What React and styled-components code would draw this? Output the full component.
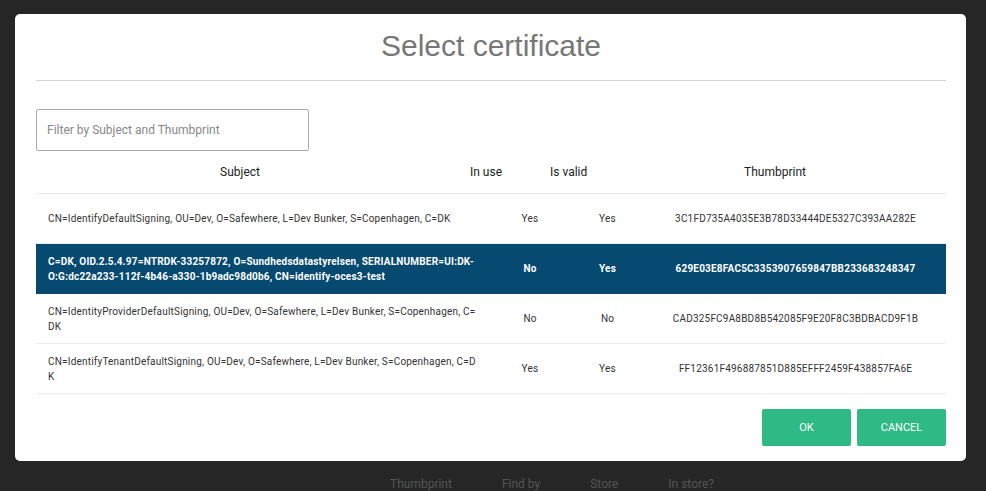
import React from 'react'
import styled, { createGlobalStyle } from 'styled-components'

const Global = createGlobalStyle`
  html, body { margin: 0; background: #262626; font-family: Roboto, "Liberation Sans", sans-serif; }
`

const Page = styled.div`
  height: 491px;
  padding: 14px 20px 0 15px;
  box-sizing: border-box;
  position: relative;
  overflow: hidden;
`

const Modal = styled.div`
  width: 951px;
  height: 447px;
  background: #fff;
  border-radius: 5px;
  box-sizing: border-box;
  padding: 0 20px 0 21px;
  display: flex;
  flex-direction: column;
`

const Title = styled.h1`
  margin: 0;
  height: 66px;
  line-height: 64px;
  text-align: center;
  font-family: "Liberation Sans", Arial, sans-serif;
  font-weight: 400;
  font-size: 30px;
  color: #777;
  border-bottom: 1px solid #d6d6d6;
`

const Filter = styled.input`
  margin-top: 28px;
  width: 273px;
  height: 42px;
  box-sizing: border-box;
  border: 1px solid #aaa;
  border-radius: 2px;
  padding: 0 10px;
  font-family: inherit;
  font-size: 12px;
  &::placeholder { color: #888; }
`

const cols = '454px 80px 75px 1fr'

const Head = styled.div`
  display: grid;
  grid-template-columns: 408px 80px 80px 1fr;
  height: 43px;
  box-sizing: border-box;
  align-items: center;
  font-size: 12px;
  color: #222;
  border-bottom: 1px solid #e6e6e6;
`

const HeadCell = styled.div`
  text-align: ${p => (p.$left ? 'left' : 'center')};
  padding-left: ${p => (p.$left ? '26px' : '0')};
`

const Row = styled.div`
  display: grid;
  grid-template-columns: ${cols};
  height: 50px;
  box-sizing: border-box;
  align-items: center;
  font-size: 10px;
  line-height: 15px;
  letter-spacing: 0.2px;
  color: ${p => (p.$active ? '#fff' : '#333')};
  background: ${p => (p.$active ? '#074a71' : '#fff')};
  font-weight: ${p => (p.$active ? 700 : 400)};
  border-bottom: 1px solid ${p => (p.$active ? '#074a71' : '#ececec')};
`

const Cell = styled.div`
  text-align: ${p => (p.$left ? 'left' : 'center')};
  padding: ${p => (p.$left ? '0 10px 0 12px' : '0')};
  word-break: break-all;
`

const Footer = styled.div`
  margin-top: auto;
  margin-bottom: 15px;
  display: flex;
  justify-content: flex-end;
  gap: 6px;
`

const Button = styled.button`
  width: 89px;
  height: 37px;
  border: none;
  border-radius: 2px;
  background: #2fb985;
  color: #fff;
  font-family: inherit;
  font-size: 11px;
  text-transform: uppercase;
`

const BackText = styled.div`
  position: absolute;
  bottom: 0;
  left: 390px;
  display: flex;
  gap: 50px;
  color: #555;
  font-size: 12px;
  line-height: 14px;
`

const rows = [
  ['CN=IdentifyDefaultSigning, OU=Dev, O=Safewhere, L=Dev Bunker, S=Copenhagen, C=DK', 'Yes', 'Yes', '3C1FD735A4035E3B78D33444DE5327C393AA282E'],
  ['C=DK, OID.2.5.4.97=NTRDK-33257872, O=Sundhedsdatastyrelsen, SERIALNUMBER=UI:DK-O:G:dc22a233-112f-4b46-a330-1b9adc98d0b6, CN=identify-oces3-test', 'No', 'Yes', '629E03E8FAC5C3353907659847BB233683248347', true],
  ['CN=IdentityProviderDefaultSigning, OU=Dev, O=Safewhere, L=Dev Bunker, S=Copenhagen, C=DK', 'No', 'No', 'CAD325FC9A8BD8B542085F9E20F8C3BDBACD9F1B'],
  ['CN=IdentifyTenantDefaultSigning, OU=Dev, O=Safewhere, L=Dev Bunker, S=Copenhagen, C=DK', 'Yes', 'Yes', 'FF12361F496887851D885EFFF2459F438857FA6E'],
]

export default function App() {
  return (
    <Page>
      <Global />
      <Modal>
        <Title>Select certificate</Title>
        <Filter placeholder="Filter by Subject and Thumbprint" />
        <Head>
          <HeadCell>Subject</HeadCell>
          <HeadCell $left>In use</HeadCell>
          <HeadCell $left>Is valid</HeadCell>
          <HeadCell>Thumbprint</HeadCell>
        </Head>
        {rows.map((r, i) => (
          <Row key={i} $active={r[4]}>
            <Cell $left>{r[0]}</Cell>
            <Cell>{r[1]}</Cell>
            <Cell>{r[2]}</Cell>
            <Cell>{r[3]}</Cell>
          </Row>
        ))}
        <Footer>
          <Button>OK</Button>
          <Button>Cancel</Button>
        </Footer>
      </Modal>
      <BackText>
        <span>Thumbprint</span>
        <span>Find by</span>
        <span>Store</span>
        <span>In store?</span>
      </BackText>
    </Page>
  )
}
